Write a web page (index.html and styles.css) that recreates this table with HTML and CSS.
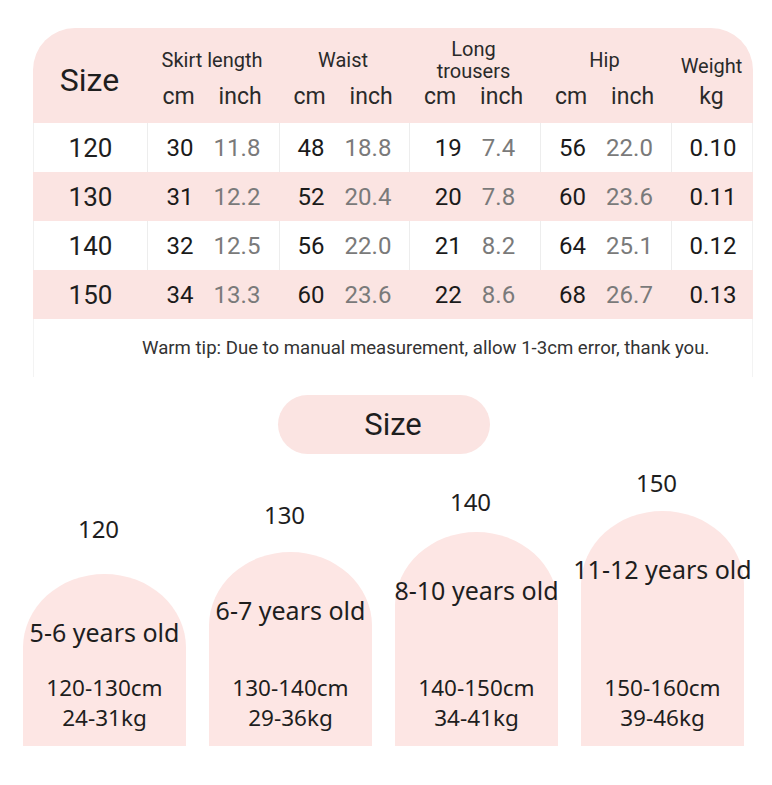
FILE: index.html
```html
<!DOCTYPE html>
<html lang="en">
<head>
  <meta charset="UTF-8">
  <title>Size Chart</title>
  <link rel="stylesheet" href="styles.css">
</head>
<body>

  <!-- Size table -->
  <div class="chart">
    <div class="head">
      <div class="hcell size-head">Size</div>
      <div class="hcell">
        <div class="title">Skirt length</div>
        <div class="units"><span>cm</span><span>inch</span></div>
      </div>
      <div class="hcell">
        <div class="title">Waist</div>
        <div class="units"><span>cm</span><span>inch</span></div>
      </div>
      <div class="hcell">
        <div class="title two">Long<br>trousers</div>
        <div class="units"><span>cm</span><span>inch</span></div>
      </div>
      <div class="hcell">
        <div class="title">Hip</div>
        <div class="units"><span>cm</span><span>inch</span></div>
      </div>
      <div class="hcell">
        <div class="title low">Weight</div>
        <div class="units"><span>kg</span></div>
      </div>
    </div>

    <div class="row">
      <div class="cell size">120</div>
      <div class="cell"><b>30</b><i>11.8</i></div>
      <div class="cell"><b>48</b><i>18.8</i></div>
      <div class="cell"><b>19</b><i>7.4</i></div>
      <div class="cell"><b>56</b><i>22.0</i></div>
      <div class="cell"><b>0.10</b></div>
    </div>
    <div class="row pink">
      <div class="cell size">130</div>
      <div class="cell"><b>31</b><i>12.2</i></div>
      <div class="cell"><b>52</b><i>20.4</i></div>
      <div class="cell"><b>20</b><i>7.8</i></div>
      <div class="cell"><b>60</b><i>23.6</i></div>
      <div class="cell"><b>0.11</b></div>
    </div>
    <div class="row">
      <div class="cell size">140</div>
      <div class="cell"><b>32</b><i>12.5</i></div>
      <div class="cell"><b>56</b><i>22.0</i></div>
      <div class="cell"><b>21</b><i>8.2</i></div>
      <div class="cell"><b>64</b><i>25.1</i></div>
      <div class="cell"><b>0.12</b></div>
    </div>
    <div class="row pink">
      <div class="cell size">150</div>
      <div class="cell"><b>34</b><i>13.3</i></div>
      <div class="cell"><b>60</b><i>23.6</i></div>
      <div class="cell"><b>22</b><i>8.6</i></div>
      <div class="cell"><b>68</b><i>26.7</i></div>
      <div class="cell"><b>0.13</b></div>
    </div>

    <div class="tip">Warm tip: Due to manual measurement, allow 1-3cm error, thank you.</div>
  </div>

  <!-- Size by age -->
  <div class="pill">Size</div>

  <div class="arches">
    <div class="item">
      <div class="label l1">120</div>
      <div class="arch a1">
        <div class="age">5-6 years old</div>
        <div class="range"><div>120-130cm</div><div>24-31kg</div></div>
      </div>
    </div>
    <div class="item">
      <div class="label l2">130</div>
      <div class="arch a2">
        <div class="age">6-7 years old</div>
        <div class="range"><div>130-140cm</div><div>29-36kg</div></div>
      </div>
    </div>
    <div class="item">
      <div class="label l3">140</div>
      <div class="arch a3">
        <div class="age">8-10 years old</div>
        <div class="range"><div>140-150cm</div><div>34-41kg</div></div>
      </div>
    </div>
    <div class="item">
      <div class="label l4">150</div>
      <div class="arch a4">
        <div class="age">11-12 years old</div>
        <div class="range"><div>150-160cm</div><div>39-46kg</div></div>
      </div>
    </div>
  </div>

</body>
</html>
```

FILE: styles.css
```css
body {
  margin: 0;
  width: 772px;
  background: #fff;
  color: #1e1e1e;
  font-family: Roboto, "Liberation Sans", sans-serif;
}

/* table */
.chart {
  margin: 0 19px 0 33px;
  padding-top: 28px;
}
.head,
.row {
  display: grid;
  grid-template-columns: 113px 132px 130px 131px 131px 83px;
}
.head {
  height: 95px;
  background: #fbe4e2;
  border-radius: 42px 42px 0 0;
}
.hcell {
  display: flex;
  flex-direction: column;
  align-items: center;
}
.size-head {
  justify-content: center;
  font-size: 32px;
  padding-top: 8px;
}
.title {
  height: 48px;
  margin-top: 8px;
  display: flex;
  align-items: center;
  text-align: center;
  font-size: 20px;
  line-height: 22px;
  color: #2a2a2a;
}
.title.low {
  padding-top: 12px;
  box-sizing: border-box;
}
.units {
  display: flex;
  gap: 24px;
  font-size: 23px;
  line-height: 26px;
  color: #2a2a2a;
}

.row {
  height: 49px;
  border-left: 1px solid #f0f0f0;
  border-right: 1px solid #f0f0f0;
}
.row.pink {
  background: #fbe4e2;
  border-color: #fbe4e2;
}
.cell {
  display: flex;
  align-items: center;
  justify-content: center;
  gap: 20px;
  font-size: 24px;
  border-left: 1px solid #ededed;
}
.row.pink .cell {
  border-left-color: transparent;
}
.cell:first-child {
  border-left: none;
}
.cell.size {
  font-size: 26px;
}
.cell b {
  font-weight: 400;
  color: #1a1a1a;
}
.cell i {
  font-style: normal;
  color: #7a7a7a;
}

.tip {
  height: 58px;
  display: flex;
  align-items: center;
  padding-left: 108px;
  font-size: 18.6px;
  color: #333;
  border-left: 1px solid #f3f3f3;
  border-right: 1px solid #f3f3f3;
}

/* pill */
.pill {
  width: 212px;
  height: 59px;
  margin: 18px 0 0 278px;
  border-radius: 30px;
  background: #fbe4e2;
  display: flex;
  align-items: center;
  justify-content: center;
  padding-left: 18px;
  box-sizing: border-box;
  font-size: 31px;
  color: #1e1e1e;
}

/* arches */
.arches {
  display: flex;
  align-items: flex-end;
  gap: 23px;
  padding-left: 23px;
  height: 292px;
  font-family: "Noto Sans", "DejaVu Sans", sans-serif;
}
.item {
  width: 163px;
  display: flex;
  flex-direction: column;
  align-items: center;
}
.label {
  font-size: 24px;
  line-height: 30px;
  margin-right: 12px;
}
.l1 { margin-bottom: 30px; }
.l2 { margin-bottom: 22px; }
.l3 { margin-bottom: 15px; }
.l4 { margin-bottom: 13px; }

.arch {
  width: 163px;
  background: #fde6e4;
  border-radius: 82px 82px 0 0 / 74px 74px 0 0;
  display: flex;
  flex-direction: column;
  align-items: center;
  padding: 42px 0 13px;
  box-sizing: border-box;
  font-size: 22.5px;
  line-height: 30px;
  color: #1e1e1e;
}
.a1 { height: 172px; }
.a2 { height: 194px; }
.a3 { height: 214px; }
.a4 { height: 235px; }

.age {
  font-size: 25px;
  line-height: 32px;
  white-space: nowrap;
}
.range {
  margin-top: auto;
  text-align: center;
}
```
